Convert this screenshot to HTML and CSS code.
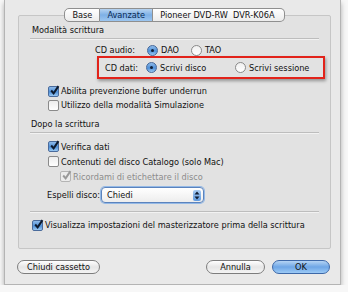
FILE: index.html
```html
<!DOCTYPE html>
<html lang="it">
<head>
    <meta charset="UTF-8">
    <title>Impostazioni masterizzazione</title>
    <link rel="stylesheet" href="styles.css">
</head>
<body>

    <div class="window">

        <!-- Schede -->
        <div class="tabs">
            <span class="tab first">Base</span>
            <span class="tab selected">Avanzate</span>
            <span class="tab last">Pioneer DVD-RW&nbsp; DVR-K06A</span>
        </div>

        <div class="box">
            <div class="heading">Modalità scrittura</div>
            <div class="sep"></div>

            <div class="radio-row audio">
                <span class="label">CD audio:</span>
                <span class="opt"><span class="radio on"></span>DAO</span>
                <span class="opt"><span class="radio"></span>TAO</span>
            </div>

            <div class="radio-row dati">
                <span class="label">CD dati:</span>
                <span class="opt"><span class="radio on"></span>Scrivi disco</span>
                <span class="opt"><span class="radio"></span>Scrivi sessione</span>
            </div>

            <div class="group first-group">
                <div class="check-row"><span class="check on"><svg viewBox="0 0 10 10"><path d="M2 5 L4.2 7.6 L8.6 1"/></svg></span>Abilita prevenzione buffer underrun</div>
                <div class="check-row"><span class="check"></span>Utilizzo della modalità Simulazione</div>
            </div>

            <div class="heading second">Dopo la scrittura</div>
            <div class="sep"></div>

            <div class="group second-group">
                <div class="check-row"><span class="check on"><svg viewBox="0 0 10 10"><path d="M2 5 L4.2 7.6 L8.6 1"/></svg></span>Verifica dati</div>
                <div class="check-row"><span class="check"></span>Contenuti del disco Catalogo (solo Mac)</div>
                <div class="check-row disabled"><span class="check"><svg viewBox="0 0 10 10"><path d="M2 5 L4.2 7.6 L8.6 1"/></svg></span>Ricordami di etichettare il disco</div>
            </div>

            <div class="popup-row">
                <span class="label">Espelli disco:</span>
                <span class="popup">
                    Chiedi
                    <span class="arrows"><svg viewBox="0 0 8 10"><path d="M4 1 L6.5 4 L1.5 4 Z M4 9 L6.5 6 L1.5 6 Z"/></svg></span>
                </span>
            </div>

            <div class="sep lower"></div>

            <div class="check-row last-check"><span class="check on"><svg viewBox="0 0 10 10"><path d="M2 5 L4.2 7.6 L8.6 1"/></svg></span>Visualizza impostazioni del masterizzatore prima della scrittura</div>
        </div>

        <div class="buttons">
            <span class="button wide">Chiudi cassetto</span>
            <span class="spacer"></span>
            <span class="button">Annulla</span>
            <span class="button default">OK</span>
        </div>

    </div>

</body>
</html>
```

FILE: styles.css
```css
body {
    margin: 0;
    padding: 0;
    background-color: #f7f7f7;
    font-family: "DejaVu Sans", sans-serif;
    font-size: 8.2px;
    color: #111;
    white-space: nowrap;
}

.window {
    margin-left: 4px;
    width: 335px;
    height: 284px;
    background-color: #e9e9e9;
    border: 1px solid #b4b4b4;
    border-top: none;
    box-shadow: 0 3px 5px rgba(0, 0, 0, 0.3);
    overflow: hidden;
}

/* Schede */
.tabs {
    display: flex;
    justify-content: center;
    margin: 8px 0 -7px 13px;
    width: 313px;
    position: relative;
    z-index: 1;
}

.tab {
    height: 12px;
    line-height: 12px;
    padding: 0 7px;
    border: 1px solid #8f8f8f;
    border-left: none;
    background: linear-gradient(#ffffff, #ececec);
}

.tab.first {
    border-left: 1px solid #8f8f8f;
    border-radius: 5px 0 0 5px;
}

.tab.last {
    border-radius: 0 5px 5px 0;
    padding-right: 9px;
}

.tab.selected {
    background: linear-gradient(#b7d3f0, #7eb0e6 50%, #9cc6f0);
    color: #0a2a55;
}

/* Riquadro */
.box {
    margin-left: 13px;
    width: 311px;
    height: 224px;
    padding-top: 8px;
    background-color: #e2e2e2;
    border: 1px solid #c6c6c6;
    border-radius: 2px;
}

.heading {
    height: 12px;
    line-height: 12px;
    padding-left: 13px;
}

.heading.second {
    margin-top: 6px;
    padding-left: 12px;
}

.sep {
    height: 1px;
    margin: 2px 11px 0;
    background-color: #bdbdbd;
    border-bottom: 1px solid #f2f2f2;
}

.sep.lower {
    margin-top: 7px;
}

.radio-row {
    display: grid;
    align-items: center;
}

.radio-row.audio {
    grid-template-columns: 52px 44px auto;
    padding-left: 76px;
    height: 12px;
    margin-top: 4px;
}

.radio-row.dati {
    grid-template-columns: 41px 89px auto;
    padding-left: 6px;
    height: 19px;
    margin-left: 78px;
    width: 218px;
    border: 2px solid #e2231a;
    box-shadow: 1px 2px 3px rgba(0, 0, 0, 0.35);
}

.opt {
    display: flex;
    align-items: center;
}

.radio {
    flex-shrink: 0;
    width: 9px;
    height: 9px;
    margin-right: 3px;
    border: 1px solid #8a8a8a;
    border-radius: 50%;
    background: linear-gradient(#f0f0f0, #ffffff);
    display: flex;
    align-items: center;
    justify-content: center;
}

.radio.on {
    border-color: #44679a;
    background: linear-gradient(#8fbbea, #4d8fd8 55%, #9ac8f2);
}

.radio.on::after {
    content: "";
    width: 3px;
    height: 3px;
    border-radius: 50%;
    background-color: #10203a;
}

.group {
    display: flex;
    flex-direction: column;
    padding-left: 29px;
}

.first-group {
    margin-top: 5px;
}

.second-group {
    margin-top: 5px;
}

.second-group .check-row {
    height: 15px;
}

.check-row {
    display: flex;
    align-items: center;
    height: 14px;
}

.check {
    flex-shrink: 0;
    width: 9px;
    height: 9px;
    margin-right: 2px;
    border: 1px solid #8a8a8a;
    border-radius: 2px;
    background: linear-gradient(#ededed, #ffffff);
    position: relative;
}

.check.on {
    border-color: #4a6b9c;
    background: linear-gradient(#8fbbea, #4d8fd8 55%, #9ac8f2);
}

.check svg {
    position: absolute;
    left: 0;
    top: -2px;
    width: 11px;
    height: 11px;
    fill: none;
    stroke: #0d1a2e;
    stroke-width: 1.8;
}

.check-row.disabled {
    padding-left: 12px;
    color: #8c8c8c;
}

.check-row.disabled .check {
    border-color: #b4b4b4;
    background: #ececec;
}

.check-row.disabled .check svg {
    stroke: #9a9a9a;
}

.popup-row {
    display: flex;
    align-items: center;
    margin-top: 2px;
    padding-left: 28px;
    height: 18px;
}

.popup-row .label {
    width: 54px;
    flex-shrink: 0;
}

.popup {
    display: flex;
    align-items: center;
    justify-content: space-between;
    width: 94px;
    height: 14px;
    padding: 0 2px 0 5px;
    border: 1px solid #5b83bd;
    border-radius: 4px;
    background: linear-gradient(#ffffff, #ededed);
    box-shadow: 0 0 0 1px #94b9e6;
}

.arrows {
    width: 8px;
    height: 11px;
    border-radius: 2px;
    background: linear-gradient(#a8cbf1, #5f9ae0);
    display: flex;
}

.arrows svg {
    width: 8px;
    height: 11px;
    fill: #0f1d33;
}

.last-check {
    margin-top: 5px;
    padding-left: 13px;
}

/* Pulsanti */
.buttons {
    display: flex;
    margin: 11px 10px 0 12px;
}

.spacer {
    flex: 1;
}

.button {
    width: 57px;
    height: 12px;
    line-height: 12px;
    text-align: center;
    border: 1px solid #7d7d7d;
    border-radius: 7px;
    background: linear-gradient(#ffffff, #e6e6e6 50%, #f4f4f4);
    margin-left: 7px;
}

.button.wide {
    width: 81px;
    margin-left: 0;
}

.button.default {
    width: 56px;
    border-color: #3d68a8;
    background: linear-gradient(#b5d4f4, #6ea6e6 50%, #9ccaf6);
}
```
